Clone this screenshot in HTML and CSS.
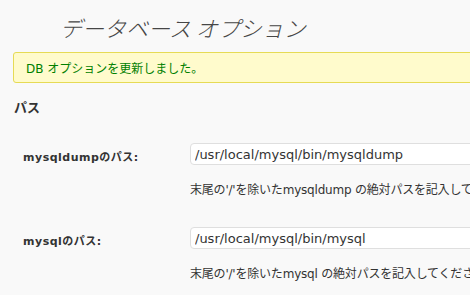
FILE: index.html
```html
<!DOCTYPE html>
<html lang="ja">

<head>
    <meta charset="UTF-8">
    <title>データベース オプション</title>
    <link rel="stylesheet" href="styles.css">
</head>

<body>
    <div class="wrap">
        <div class="titulo">
            <div class="icone"></div>
            <h2>データベース オプション</h2>
        </div>

        <div class="aviso">
            <p>DB オプションを更新しました。</p>
        </div>

        <h3>パス</h3>

        <div class="tabela">
            <div class="linha">
                <label for="dump">mysqldumpのパス:</label>
                <div class="campo">
                    <input type="text" id="dump" value="/usr/local/mysql/bin/mysqldump" />
                    <p class="desc">末尾の'/'を除いたmysqldump の絶対パスを記入してください。</p>
                </div>
            </div>
            <div class="linha">
                <label for="mysql">mysqlのパス:</label>
                <div class="campo">
                    <input type="text" id="mysql" value="/usr/local/mysql/bin/mysql" />
                    <p class="desc">末尾の'/'を除いたmysql の絶対パスを記入してください。</p>
                </div>
            </div>
        </div>
    </div>
</body>

</html>
```

FILE: styles.css
```css
body {
    margin: 0;
    background-color: #f9f9f9;
    color: #333;
    font-family: "DejaVu Sans", "Noto Sans CJK JP", sans-serif;
    overflow: hidden;
}

.wrap {
    width: 700px;
    padding-left: 13px;
}

.titulo {
    display: flex;
    align-items: center;
    height: 46px;
    padding-top: 4px;
}

.icone {
    width: 36px;
    height: 34px;
    margin-right: 11px;
}

h2 {
    margin: 0;
    font-family: "Noto Sans CJK JP", sans-serif;
    font-size: 22px;
    font-style: italic;
    font-weight: 300;
    color: #464646;
}

.aviso {
    margin-top: 2px;
    background-color: #fffbcc;
    border: 1px solid #e6db55;
    border-radius: 3px;
    height: 29px;
    display: flex;
    align-items: center;
    padding-left: 12px;
}

.aviso p {
    margin: 0;
    font-size: 12px;
    color: #008000;
}

h3 {
    margin: 14px 0 0 1px;
    font-size: 13px;
    font-weight: bold;
    color: #333;
}

.tabela {
    margin-top: 27px;
}

.linha {
    display: flex;
    margin-bottom: 30px;
}

.linha:last-child {
    margin-bottom: 0;
}

label {
    width: 167px;
    padding: 5px 0 0 10px;
    font-size: 11px;
    font-weight: bold;
    letter-spacing: 0.5px;
    color: #333;
}

input {
    width: 400px;
    height: 22px;
    box-sizing: border-box;
    margin: 0;
    padding: 0 4px;
    border: 1px solid #dfdfdf;
    border-radius: 4px;
    background-color: #fff;
    font-family: "DejaVu Sans", sans-serif;
    font-size: 13px;
    color: #333;
}

.desc {
    margin: 15px 0 0;
    font-size: 12px;
    letter-spacing: -0.2px;
    color: #333;
}
```
